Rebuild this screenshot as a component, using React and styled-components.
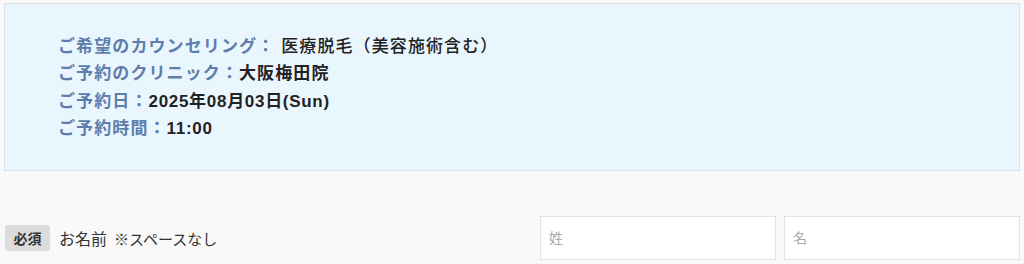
import React from 'react';
import styled, { createGlobalStyle } from 'styled-components';

const GlobalStyle = createGlobalStyle`
  html, body {
    margin: 0;
    padding: 0;
    background: #f9f9f9;
    font-family: "Liberation Sans", "Noto Sans CJK JP", sans-serif;
  }
`;

const Page = styled.main`
  padding: 3px 4px 0;
`;

const Summary = styled.section`
  background: #eaf6fe;
  border: 1px solid #dde1e5;
  padding: 29px 53px 28px;
  height: 168px;
  box-sizing: border-box;
`;

const Line = styled.p`
  margin: 0;
  font-size: 17px;
  letter-spacing: 1.1px;
  line-height: 27.4px;
  font-weight: bold;
  color: #222;
`;

const Label = styled.span`
  color: #5f7dab;
`;

const Value = styled.span`
  font-weight: ${(p) => (p.$medium ? 500 : 'bold')};
  margin-left: ${(p) => (p.$gap ? '6px' : '0')};
  letter-spacing: ${(p) => (p.$tight ? '0.7px' : '1.1px')};
`;

const FormRow = styled.div`
  display: flex;
  align-items: center;
  margin-top: 45px;
  padding-left: 1px;
`;

const Badge = styled.span`
  display: inline-flex;
  align-items: center;
  justify-content: center;
  width: 45px;
  height: 26px;
  border-radius: 3px;
  background: #dcdcdc;
  color: #333;
  font-size: 14px;
  font-weight: bold;
`;

const FieldName = styled.span`
  margin-left: 9px;
  font-size: 16px;
  color: #333;
`;

const Note = styled.span`
  margin-left: 7px;
  font-size: 15px;
  color: #333;
`;

const Inputs = styled.div`
  margin-left: auto;
  display: flex;
  gap: 8px;
`;

const TextInput = styled.input`
  width: 236px;
  height: 44px;
  box-sizing: border-box;
  border: 1px solid #e1e1e1;
  background: #fff;
  padding: 0 8px;
  font-size: 14px;
  font-family: "Liberation Sans", "Noto Sans CJK JP", sans-serif;
  color: #333;
  outline: none;

  &::placeholder {
    color: #aaa;
  }
`;

export default function App() {
  return (
    <>
      <GlobalStyle />
      <Page>
        <Summary>
          <Line>
            <Label>ご希望のカウンセリング：</Label>
            <Value $medium $gap>医療脱毛（美容施術含む）</Value>
          </Line>
          <Line>
            <Label>ご予約のクリニック：</Label>
            <Value>大阪梅田院</Value>
          </Line>
          <Line>
            <Label>ご予約日：</Label>
            <Value $tight>2025年08月03日(Sun)</Value>
          </Line>
          <Line>
            <Label>ご予約時間：</Label>
            <Value $tight>11:00</Value>
          </Line>
        </Summary>
        <FormRow>
          <Badge>必須</Badge>
          <FieldName>お名前</FieldName>
          <Note>※スペースなし</Note>
          <Inputs>
            <TextInput placeholder="姓" />
            <TextInput placeholder="名" />
          </Inputs>
        </FormRow>
      </Page>
    </>
  );
}
